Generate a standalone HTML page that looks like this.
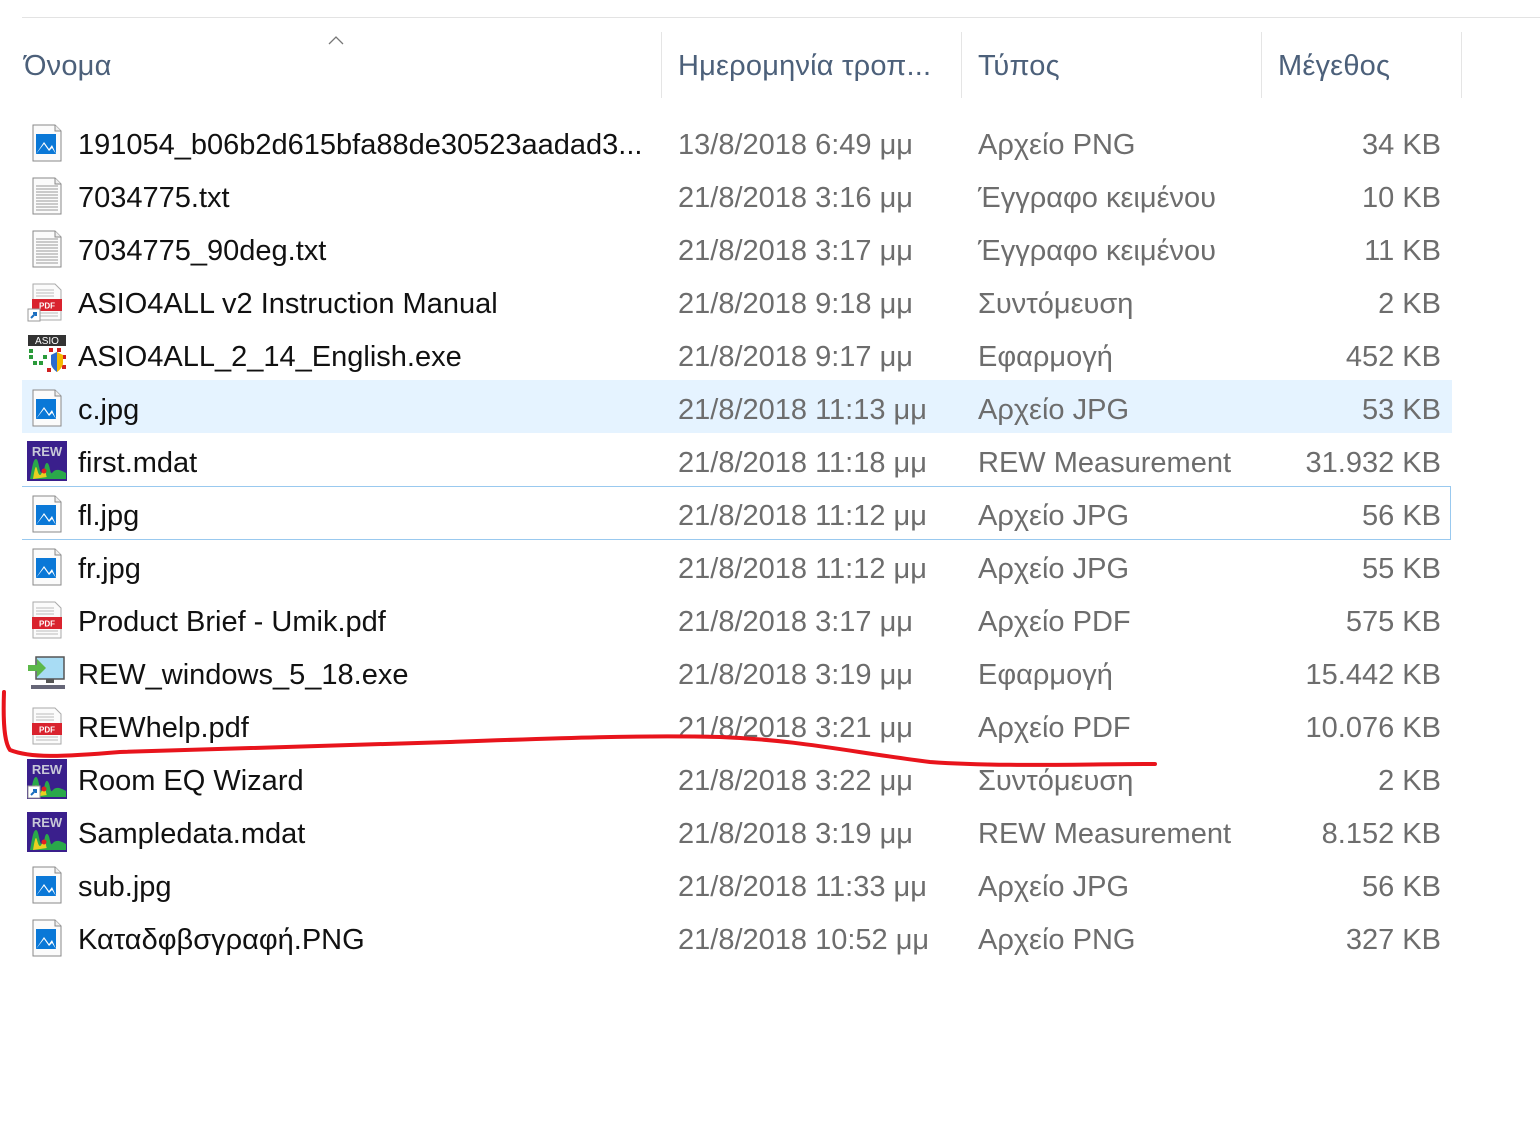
<!DOCTYPE html>
<html><head><meta charset="utf-8"><style>
body{margin:0;width:1540px;height:1146px;background:#fff;position:relative;overflow:hidden;font-family:"Segoe UI","Liberation Sans","DejaVu Sans",sans-serif;}
.a{position:absolute;white-space:nowrap;}
.hd{font-size:29px;color:#4c607a;top:50px;letter-spacing:0.2px;}
.sep{position:absolute;top:32px;height:66px;width:1px;background:#e5e5e5;}
.row{position:absolute;left:0;width:1540px;height:53px;font-size:29px;line-height:53px;letter-spacing:0;}
.row .n{position:absolute;left:78px;top:2px;color:#111;}
.row .d{position:absolute;left:678px;top:2px;color:#6d6d6d;}
.row .t{position:absolute;left:978px;top:2px;color:#6d6d6d;}
.row .s{position:absolute;right:99px;top:2px;color:#6d6d6d;}
.row svg{position:absolute;left:27px;top:6px;}
</style></head><body>
<svg width="0" height="0" style="position:absolute">
<defs>
<symbol id="img" viewBox="0 0 40 40"><path d="M6 2h22l6 6v30H6z" fill="#fbfbfb" stroke="#8a8a8a"/><path d="M28 2v6h6" fill="#eee" stroke="#8a8a8a"/><rect x="9" y="11" width="20" height="20" fill="#0a78d7"/><path d="M9 31l8-12 5 7 3-4 4 9z" fill="#fff"/><path d="M9 31l8-10 5 7 3-3 4 6z" fill="#0a78d7"/></symbol>
<symbol id="txt" viewBox="0 0 40 40"><path d="M6 2h22l6 6v30H6z" fill="#fbfbfb" stroke="#8a8a8a"/><path d="M28 2v6h6" fill="#eee" stroke="#8a8a8a"/><path d="M9 10h22M9 13h22M9 16h22M9 19h22M9 22h22M9 25h22M9 28h22M9 31h22M9 34h22" stroke="#9a9a9a" stroke-width="1"/></symbol>
<symbol id="pdf" viewBox="0 0 40 40"><path d="M6 2h22l6 6v30H6z" fill="#fbfbfb" stroke="#aaa"/><path d="M9 8h18M9 11h18M9 14h18M9 31h22M9 34h22" stroke="#bbb"/><rect x="5" y="17" width="30" height="12" fill="#d9232e"/><text x="20" y="26.5" font-size="8" font-family="Liberation Sans" font-weight="bold" fill="#fff" text-anchor="middle">PDF</text></symbol>
<symbol id="short" viewBox="0 0 40 40"><rect x="1" y="27" width="12" height="12" fill="#fff" stroke="#999"/><path d="M4 36l5-5M6 31h3v3" stroke="#1c6fc0" stroke-width="2" fill="none"/></symbol>
<symbol id="rew" viewBox="0 0 40 40"><rect width="40" height="40" fill="#3a1f8c"/><text x="20" y="15" font-size="13" font-family="Liberation Sans" font-weight="bold" fill="#c8c8d8" text-anchor="middle">REW</text><path d="M3 38c2-10 3-20 6-20s3 14 6 14 2-10 5-10 3 12 5 10 4-6 14 0v6H3z" fill="#2aa84a"/><path d="M6 38c1-6 2-12 3-12s2 8 4 8 2-6 4-6 2 8 3 8" fill="#e8d020"/><circle cx="17" cy="30" r="2.5" fill="#e02020"/></symbol>
<symbol id="asio" viewBox="0 0 40 40"><rect x="1" y="0" width="38" height="11" fill="#333"/><text x="20" y="9" font-size="10" font-family="Liberation Sans" fill="#fff" text-anchor="middle">ASIO</text><g fill="#2a9a3a"><rect x="2" y="14" width="4" height="4"/><rect x="2" y="20" width="4" height="4"/><rect x="6" y="26" width="4" height="4"/><rect x="12" y="26" width="4" height="4"/><rect x="16" y="20" width="4" height="4"/></g><g fill="#d02020"><rect x="22" y="13" width="4" height="4"/><rect x="30" y="13" width="4" height="4"/><rect x="35" y="20" width="4" height="4"/><rect x="35" y="30" width="4" height="4"/><rect x="20" y="33" width="4" height="4"/></g><path d="M24 20l6-3 6 3v8c0 5-6 9-6 9s-6-4-6-9z" fill="#f5b800"/><path d="M24 20l6-3v20s-6-4-6-9z" fill="#2a6ad0"/></symbol>
<symbol id="inst" viewBox="0 0 40 40"><rect x="9" y="4" width="28" height="22" fill="#a8dcf4" stroke="#555" stroke-width="1.5"/><path d="M19 26h8v4h-8z" fill="#555"/><rect x="4" y="32" width="34" height="4" fill="#667"/><path d="M1 12h9V6l9 9-9 9v-6H1z" fill="#5cb84a"/></symbol>
</defs></svg>

<div style="position:absolute;left:22px;top:17px;width:1518px;height:1px;background:#e3e3e3"></div>
<svg class="a" style="left:327px;top:34px" width="18" height="12"><path d="M2 10l7-7 7 7" fill="none" stroke="#777" stroke-width="1.3"/></svg>
<div class="a hd" style="left:24px">Όνομα</div>
<div class="a hd" style="left:678px">Ημερομηνία τροπ...</div>
<div class="a hd" style="left:978px">Τύπος</div>
<div class="a hd" style="left:1278px">Μέγεθος</div>
<div class="sep" style="left:661px"></div><div class="sep" style="left:961px"></div><div class="sep" style="left:1261px"></div><div class="sep" style="left:1461px"></div>

<div style="position:absolute;left:22px;top:380px;width:1430px;height:53px;background:#e5f3ff"></div>
<div style="position:absolute;left:22px;top:486px;width:1428px;height:52px;border:1px solid #99c9ef;border-left:none"></div>

<div class="row" style="top:117px"><svg width="40" height="40"><use href="#img"/></svg><span class="n">191054_b06b2d615bfa88de30523aadad3...</span><span class="d">13/8/2018 6:49 μμ</span><span class="t">Αρχείο PNG</span><span class="s">34 KB</span></div>
<div class="row" style="top:170px"><svg width="40" height="40"><use href="#txt"/></svg><span class="n">7034775.txt</span><span class="d">21/8/2018 3:16 μμ</span><span class="t">Έγγραφο κειμένου</span><span class="s">10 KB</span></div>
<div class="row" style="top:223px"><svg width="40" height="40"><use href="#txt"/></svg><span class="n">7034775_90deg.txt</span><span class="d">21/8/2018 3:17 μμ</span><span class="t">Έγγραφο κειμένου</span><span class="s">11 KB</span></div>
<div class="row" style="top:276px"><svg width="40" height="40"><use href="#pdf"/><use href="#short"/></svg><span class="n">ASIO4ALL v2 Instruction Manual</span><span class="d">21/8/2018 9:18 μμ</span><span class="t">Συντόμευση</span><span class="s">2 KB</span></div>
<div class="row" style="top:329px"><svg width="40" height="40"><use href="#asio"/></svg><span class="n">ASIO4ALL_2_14_English.exe</span><span class="d">21/8/2018 9:17 μμ</span><span class="t">Εφαρμογή</span><span class="s">452 KB</span></div>
<div class="row" style="top:382px"><svg width="40" height="40"><use href="#img"/></svg><span class="n">c.jpg</span><span class="d">21/8/2018 11:13 μμ</span><span class="t">Αρχείο JPG</span><span class="s">53 KB</span></div>
<div class="row" style="top:435px"><svg width="40" height="40"><use href="#rew"/></svg><span class="n">first.mdat</span><span class="d">21/8/2018 11:18 μμ</span><span class="t">REW Measurement</span><span class="s">31.932 KB</span></div>
<div class="row" style="top:488px"><svg width="40" height="40"><use href="#img"/></svg><span class="n">fl.jpg</span><span class="d">21/8/2018 11:12 μμ</span><span class="t">Αρχείο JPG</span><span class="s">56 KB</span></div>
<div class="row" style="top:541px"><svg width="40" height="40"><use href="#img"/></svg><span class="n">fr.jpg</span><span class="d">21/8/2018 11:12 μμ</span><span class="t">Αρχείο JPG</span><span class="s">55 KB</span></div>
<div class="row" style="top:594px"><svg width="40" height="40"><use href="#pdf"/></svg><span class="n">Product Brief - Umik.pdf</span><span class="d">21/8/2018 3:17 μμ</span><span class="t">Αρχείο PDF</span><span class="s">575 KB</span></div>
<div class="row" style="top:647px"><svg width="40" height="40"><use href="#inst"/></svg><span class="n">REW_windows_5_18.exe</span><span class="d">21/8/2018 3:19 μμ</span><span class="t">Εφαρμογή</span><span class="s">15.442 KB</span></div>
<div class="row" style="top:700px"><svg width="40" height="40"><use href="#pdf"/></svg><span class="n">REWhelp.pdf</span><span class="d">21/8/2018 3:21 μμ</span><span class="t">Αρχείο PDF</span><span class="s">10.076 KB</span></div>
<div class="row" style="top:753px"><svg width="40" height="40"><use href="#rew"/><use href="#short"/></svg><span class="n">Room EQ Wizard</span><span class="d">21/8/2018 3:22 μμ</span><span class="t">Συντόμευση</span><span class="s">2 KB</span></div>
<div class="row" style="top:806px"><svg width="40" height="40"><use href="#rew"/></svg><span class="n">Sampledata.mdat</span><span class="d">21/8/2018 3:19 μμ</span><span class="t">REW Measurement</span><span class="s">8.152 KB</span></div>
<div class="row" style="top:859px"><svg width="40" height="40"><use href="#img"/></svg><span class="n">sub.jpg</span><span class="d">21/8/2018 11:33 μμ</span><span class="t">Αρχείο JPG</span><span class="s">56 KB</span></div>
<div class="row" style="top:912px"><svg width="40" height="40"><use href="#img"/></svg><span class="n">Καταδφβσγραφή.PNG</span><span class="d">21/8/2018 10:52 μμ</span><span class="t">Αρχείο PNG</span><span class="s">327 KB</span></div>

<svg class="a" style="left:0;top:0" width="1540" height="1146"><path d="M4 692C3 720 4 742 10 750C30 758 60 757 120 752C220 748 330 745 450 742C560 738 640 735 720 737C800 740 850 752 930 762C1000 767 1080 764 1155 764" fill="none" stroke="#e8141c" stroke-width="4" stroke-linecap="round"/></svg>
</body></html>
